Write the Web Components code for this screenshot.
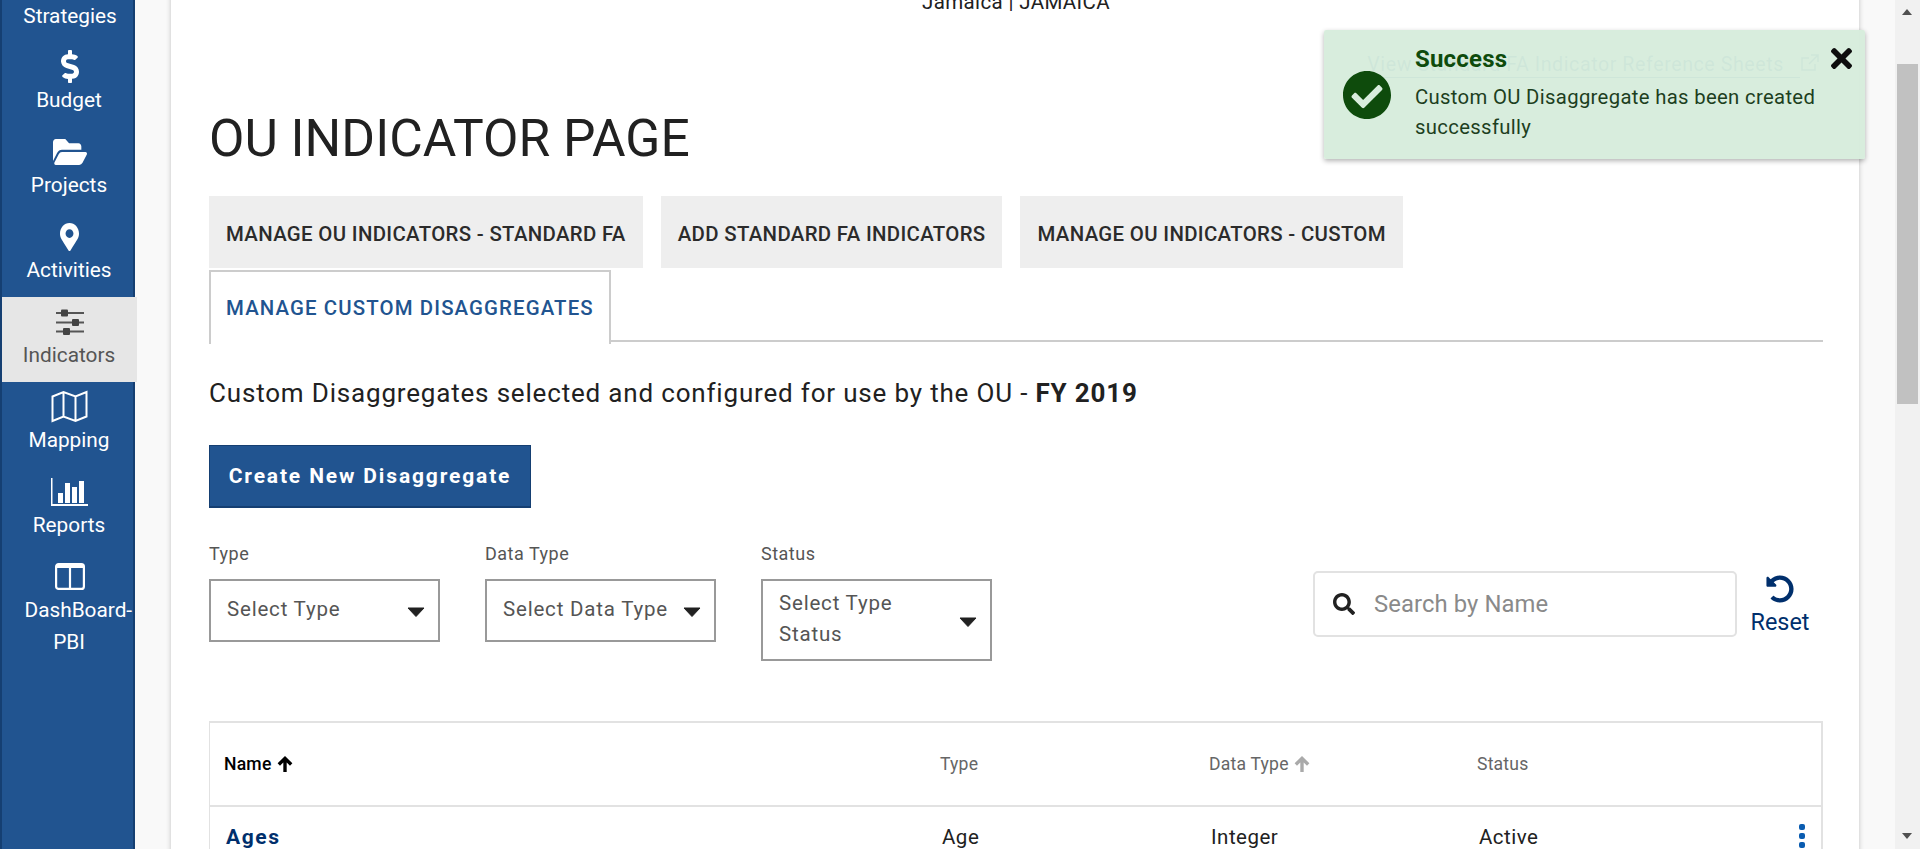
<!DOCTYPE html>
<html lang="en"><head><meta charset="utf-8"><title>OU Indicator Page</title>
<style>
html,body{margin:0;height:849px;overflow:hidden;font-family:Roboto,"Liberation Sans",sans-serif;background:#f9f9f9}
</style></head><body>
<app-shell>
  <side-nav slot="nav"></side-nav>
  <main-card>
    <ou-header slot="head"></ou-header>
    <ou-tabs slot="tabs"></ou-tabs>
    <filter-bar slot="filters"></filter-bar>
    <data-table slot="table"></data-table>
  </main-card>
  <fake-scrollbar slot="bar"></fake-scrollbar>
  <toast-note slot="toast"></toast-note>
</app-shell>
<script>
function def(name, html){
  customElements.define(name, class extends HTMLElement{
    constructor(){super();this.attachShadow({mode:'open'}).innerHTML=html;}
  });
}
const P={
 dollar:'<svg viewBox="0 0 288 512" width="18" height="33" preserveAspectRatio="none" fill="currentColor"><path d="M209.2 233.4l-108-31.6C88.7 198.2 80 186.5 80 173.5c0-16.3 13.2-29.5 29.5-29.5h66.3c12.2 0 24.2 3.7 34.2 10.5 6.1 4.1 14.3 3.1 19.5-2l34.8-34c7.1-6.9 6.1-18.4-1.8-24.5C238 74.8 207.4 64.1 176 64V16c0-8.8-7.2-16-16-16h-32c-8.8 0-16 7.2-16 16v48h-2.5C45.8 64-5.4 118.7.5 183.6c4.2 46.1 39.4 83.6 83.8 96.6l102.5 30c12.5 3.7 21.2 15.3 21.2 28.3 0 16.3-13.2 29.5-29.5 29.5h-66.3C100 368 88 364.3 78 357.5c-6.1-4.1-14.3-3.1-19.5 2l-34.8 34c-7.1 6.9-6.1 18.4 1.8 24.5 24.5 19.2 55.1 29.9 86.5 30v48c0 8.8 7.2 16 16 16h32c8.8 0 16-7.2 16-16v-48.2c46.6-.9 90.3-28.6 105.7-72.7 21.5-61.6-14.6-124.8-72.5-141.7z"/></svg>',
 folder:'<svg viewBox="0 64 576 384" width="34" height="26" preserveAspectRatio="none" fill="currentColor"><path d="M572.694 292.093L500.27 416.248A63.997 63.997 0 0 1 444.989 448H45.025c-18.523 0-30.064-20.093-20.731-36.093l72.424-124.155A64 64 0 0 1 152 256h399.964c18.523 0 30.064 20.093 20.73 36.093zM152 224h328v-48c0-26.51-21.49-48-48-48H272l-64-64H48C21.49 64 0 85.49 0 112v278.046l69.077-118.418C86.214 242.25 117.989 224 152 224z"/></svg>',
 marker:'<svg viewBox="0 0 384 512" width="19" height="28" preserveAspectRatio="none" fill="currentColor"><path d="M172.268 501.67C26.97 291.031 0 268.413 0 192 0 85.961 85.961 0 192 0s192 85.961 192 192c0 76.413-26.97 99.031-172.268 309.67-9.535 13.774-29.93 13.773-39.464 0zM192 272c44.183 0 80-35.817 80-80s-35.817-80-80-80-80 35.817-80 80 35.817 80 80 80z"/></svg>',
 sliders:'<svg viewBox="0 0 28 26" width="28" height="26"><path d="M0 4h28M0 13.500h28M0 22.500h28" stroke="#555" stroke-width="2"/><g fill="#444"><rect x="5" y="0.500" width="7" height="7" rx="1"/><rect x="16" y="10" width="7" height="7" rx="1"/><rect x="7" y="19" width="7" height="7" rx="1"/></g></svg>',
 map:'<svg viewBox="0 0 37 33" width="37" height="33" fill="none" stroke="currentColor" stroke-width="2"><path d="M1.500 6.500L12.500 2L24.500 6.500L35.500 2V26.500L24.500 31L12.500 26.500L1.500 31ZM12.500 2V26.500M24.500 6.500V31"/></svg>',
 chart:'<svg viewBox="0 0 37 28" width="37" height="28" fill="currentColor"><path d="M0 0h1.500v26h35.500v2H0z"/><rect x="7" y="15" width="5" height="10"/><rect x="14" y="5" width="5" height="20"/><rect x="21" y="9" width="5" height="16"/><rect x="28" y="3" width="5" height="22"/></svg>',
 panel:'<svg viewBox="0 0 30 27" width="30" height="27" fill="none" stroke="currentColor" stroke-width="2.200"><rect x="1.100" y="1.100" width="27.800" height="24.800" rx="2.500"/><path d="M15 2v24"/><path d="M1.500 3.500h27" stroke-width="3"/></svg>'
};
def('app-shell',`<style>
:host{display:flex;width:1920px;height:849px;position:relative;overflow:hidden;background:#f9f9f9}
.content{flex:1;min-width:0;padding:0 36px;overflow:hidden}
</style><slot name="nav"></slot><div class="content"><slot></slot></div><slot name="bar"></slot><slot name="toast"></slot>`);

def('nav-item',`<style>
:host{display:flex;flex-direction:column;align-items:center;height:85px;box-sizing:border-box;width:135px;padding:8px 1px 0 0;color:#fff;font-size:20.800px;line-height:32px;text-align:center;white-space:nowrap;flex:none}
:host([active]){background:#e6e6e6;color:#555}
.ic{height:33px;flex:none;display:flex;align-items:center;justify-content:center;line-height:0;padding-left:1px}
.l{margin-top:1px;flex:none}
</style><div class="ic"><slot name="i"></slot></div><div class="l"><slot></slot></div>`);

def('side-nav',`<style>
:host{display:block;width:131px;flex:none;height:849px;background:#215490;border-left:2px solid #153f72;border-right:2px solid #153f72;color:#fff;position:relative;z-index:1}
.top{height:42px;width:135px;text-align:center;font-size:20.800px;line-height:32px;padding-left:1px;box-sizing:border-box}
.list{display:flex;flex-direction:column}
.wrap{display:block;width:89px}
</style><div class="top">Strategies</div><div class="list">
<nav-item><span slot="i">${P.dollar}</span>Budget</nav-item>
<nav-item><span slot="i">${P.folder}</span>Projects</nav-item>
<nav-item><span slot="i">${P.marker}</span>Activities</nav-item>
<nav-item active><span slot="i">${P.sliders}</span>Indicators</nav-item>
<nav-item><span slot="i">${P.map}</span>Mapping</nav-item>
<nav-item><span slot="i">${P.chart}</span>Reports</nav-item>
<nav-item><span slot="i">${P.panel}</span><span class="wrap">DashBoard-<br>PBI</span></nav-item>
</div>`);

def('main-card',`<style>
:host{display:block;background:#fff;box-shadow:0 0 5px rgba(0,0,0,.22);height:900px;margin-top:-10px;padding:0 36px 0 38px;box-sizing:border-box;width:1688px}
</style><slot name="head"></slot><slot name="tabs"></slot><slot name="filters"></slot><slot name="table"></slot>`);

def('ou-header',`<style>
:host{display:block;color:#212121}
.ou{text-align:center;font-size:20.500px;line-height:24px;height:24px;letter-spacing:.35px}
.link{display:flex;justify-content:flex-end;height:30px;margin-top:39px;font-size:19.600px;color:#0a4e96;padding-right:3px}
.link span{border-bottom:1px solid #0a4e96;line-height:24px;height:24px;letter-spacing:.58px;padding-right:16px}
h1{margin:0;font-weight:400;font-size:51.500px;line-height:56px;margin-top:28px;letter-spacing:0;color:#212121}
</style><div class="ou">Jamaica | JAMAICA</div>
<div class="link"><span>View Standard FA Indicator Reference Sheets</span><svg viewBox="0 0 20 20" width="20" height="20" fill="none" stroke="currentColor" stroke-width="1.500"><path d="M15 11v6H2V5h7M11 2h7v7M18 2L9 11"/></svg></div>
<h1>OU INDICATOR PAGE</h1>`);

def('ou-tabs',`<style>
:host{display:block;margin-top:29px}
.row{display:flex;flex-wrap:wrap;gap:0 18px;border-bottom:2px solid #ccc;height:146px;box-sizing:border-box;align-content:flex-start}
.t{height:72px;box-sizing:border-box;background:#eee;padding:3px 17px 0;display:flex;align-items:center;font-size:20.400px;font-weight:500;color:#2b2b2b;white-space:nowrap;letter-spacing:.33px}
.brk{flex-basis:100%;height:0}
.a{height:74px;margin-top:2px;background:#fff;border:2px solid #ccc;border-bottom:0;color:#215490;padding:0 15px;letter-spacing:1.120px;position:relative}
.a::after{content:"";position:absolute;left:0;right:0;bottom:-2px;height:2px;background:#fff}
h2{margin:35px 0 0;font-weight:400;font-size:26px;line-height:32px;letter-spacing:.82px;color:#212121}
b{font-weight:700}
button{display:block;margin-top:36px;width:322px;height:63px;background:#215490;border:2px solid #153f72;border-width:1px 1px 2px;color:#fff;font:700 21px Roboto,sans-serif;letter-spacing:1.850px;padding:0}
</style><div class="row"><div class="t">MANAGE OU INDICATORS - STANDARD FA</div><div class="t">ADD STANDARD FA INDICATORS</div><div class="t">MANAGE OU INDICATORS - CUSTOM</div><div class="brk"></div><div class="t a">MANAGE CUSTOM DISAGGREGATES</div></div>
<h2>Custom Disaggregates selected and configured for use by the OU - <b>FY 2019</b></h2>
<button>Create New Disaggregate</button>`);

def('select-box',`<style>
:host{display:block;width:231px;color:#555}
label{display:block;font-size:18px;line-height:24px;height:24px;letter-spacing:.5px}
.b{margin-top:13px;box-sizing:border-box;border:2px solid #999;min-height:63px;display:flex;align-items:center;padding:7px 14px 9px 16px;font-size:20.500px;line-height:31px;letter-spacing:.8px;position:relative;color:#555}
.c{flex:1;white-space:nowrap}
svg{flex:none;margin-left:2px;margin-right:-1px;margin-top:5px}
</style><label><slot name="l"></slot></label><div class="b"><div class="c"><slot></slot></div><svg viewBox="0 0 18 10" width="18" height="10"><path d="M1 1h16L9 9.500z" fill="#212121" stroke="#212121" stroke-linejoin="round"/></svg></div>`);

def('filter-bar',`<style>
:host{display:flex;align-items:flex-start;margin-top:34px;height:179px}
.f{display:flex;gap:45px}
.s{margin-left:auto;display:flex;align-items:flex-start;margin-top:29px}
.box{box-sizing:border-box;width:424px;height:66px;border:2px solid #e2e2e2;border-radius:5px;display:flex;align-items:center;padding-left:18px;font-size:23.800px;color:#8a8a8a;letter-spacing:.1px}
.box svg{margin-right:19px;flex:none}
.r{width:86px;text-align:center;color:#002f6c;font-size:23.400px;line-height:26px;display:flex;flex-direction:column;align-items:center}
.r svg{margin:4px 0 6px}
</style><div class="f">
<select-box><span slot="l">Type</span>Select Type</select-box>
<select-box><span slot="l">Data Type</span>Select Data Type</select-box>
<select-box><span slot="l">Status</span>Select Type<br>Status</select-box></div>
<div class="s"><div class="box"><svg viewBox="0 0 512 512" width="22" height="22" fill="#212121"><path d="M505 442.7L405.3 343c-4.5-4.5-10.6-7-17-7H372c27.6-35.3 44-79.7 44-128C416 93.1 322.9 0 208 0S0 93.1 0 208s93.1 208 208 208c48.3 0 92.7-16.4 128-44v16.3c0 6.4 2.5 12.5 7 17l99.7 99.7c9.4 9.4 24.6 9.4 33.9 0l28.3-28.3c9.4-9.4 9.4-24.6.1-34zM208 336c-70.7 0-128-57.2-128-128 0-70.7 57.2-128 128-128 70.7 0 128 57.2 128 128 0 70.7-57.2 128-128 128z"/></svg>Search by Name</div>
<div class="r"><svg viewBox="0 0 512 512" width="28" height="28" fill="#002f6c"><path d="M255.545 8c-66.269.119-126.438 26.233-170.86 68.685L48.971 40.971C33.851 25.851 8 36.559 8 57.941V192c0 13.255 10.745 24 24 24h134.059c21.382 0 32.09-25.851 16.971-40.971l-41.75-41.75c30.864-28.899 70.801-44.907 113.23-45.273 92.398-.798 170.283 73.977 169.484 169.442C423.236 348.009 349.816 424 256 424c-41.127 0-79.997-14.678-110.63-41.556-4.743-4.161-11.906-3.908-16.368.553L89.34 422.659c-4.872 4.872-4.631 12.815.482 17.433C133.798 479.813 192.074 504 256 504c136.966 0 247.999-111.033 248-247.998C504.001 119.193 392.354 7.755 255.545 8z"/></svg>Reset</div></div>`);

const UP=c=>`<svg viewBox="0 0 16 16" width="18" height="18" style="vertical-align:-3px" fill="none" stroke="${c}" stroke-width="3"><path d="M8 15V3M2.500 8.500L8 3l5.500 5.500"/></svg>`;
def('data-table',`<style>
:host{display:block;border:1px solid #e2e2e2;border-width:2px 2px 0 1px;height:200px;box-sizing:border-box}
.r{display:grid;grid-template-columns:716px 269px 268px 1fr}
.h{height:82px;border-bottom:2px solid #e2e2e2;align-items:center;font-size:17.600px;color:#666}
.h div{padding-left:14px;letter-spacing:.2px}
.h div:first-child{color:#000;font-weight:500;padding-left:14px}
.d{font-size:20.500px;color:#212121;padding-top:16px;line-height:28px;letter-spacing:.5px;position:relative}
.d div{padding-left:16px}
.d div:first-child{font-weight:700;color:#002f6c;letter-spacing:1.600px;font-size:21px}
.k{position:absolute;right:16px;top:17px}
</style><div class="r h"><div>Name ${UP('#000')}</div><div>Type</div><div>Data Type ${UP('#aaa')}</div><div>Status</div></div>
<div class="r d"><div>Ages</div><div>Age</div><div>Integer</div><div>Active</div><span class="k"><svg viewBox="0 0 6 24" width="6" height="24" fill="#0a5cb0"><rect y="0" width="6" height="6" rx="2"/><rect y="9" width="6" height="6" rx="2"/><rect y="18" width="6" height="6" rx="2"/></svg></span></div>`);

def('fake-scrollbar',`<style>
:host{display:block;flex:none;width:25px;height:849px;background:#f1f1f1;position:relative}
.thumb{position:absolute;top:64px;left:2px;right:2px;height:340px;background:#c1c1c1}
.u,.d{position:absolute;left:7px;width:0;height:0;border-left:5.500px solid transparent;border-right:5.500px solid transparent}
.u{top:9px;border-bottom:6px solid #505050}
.d{top:833px;border-top:6px solid #505050}
</style><div class="u"></div><div class="thumb"></div><div class="d"></div>`);

def('toast-note',`<style>
:host{position:absolute;left:1324px;top:30px;width:541px;height:129px;background:rgba(214,236,220,.96);box-shadow:0 2px 5px rgba(0,0,0,.3);border-radius:2px;box-sizing:border-box;display:block;color:#1d3f1e;z-index:2}
.ic{position:absolute;left:19px;top:41px}
.t{position:absolute;left:91px;top:16px;font-size:24px;font-weight:700;line-height:26px;color:#0e4b0c;letter-spacing:.2px}
.m{position:absolute;left:91px;top:52px;width:430px;font-size:20.300px;line-height:30px;letter-spacing:.33px}
.x{position:absolute;left:507px;top:17px}
</style><svg class="ic" viewBox="8 8 496 496" width="48" height="48"><path fill="#0e4b0c" d="M504 256c0 136.967-111.033 248-248 248S8 392.967 8 256 119.033 8 256 8s248 111.033 248 248zM227.314 387.314l184-184c6.248-6.248 6.248-16.379 0-22.627l-22.627-22.627c-6.248-6.249-16.379-6.249-22.628 0L216 308.118l-70.059-70.059c-6.248-6.248-16.379-6.248-22.628 0l-22.627 22.627c-6.248 6.248-6.248 16.379 0 22.627l104 104c6.249 6.249 16.379 6.249 22.628.001z"/></svg>
<div class="t">Success</div><div class="m">Custom OU Disaggregate has been created successfully</div>
<svg class="x" viewBox="0 64 352 384" width="21" height="23" fill="#0d0d0d"><path d="M242.72 256l100.07-100.07c12.28-12.28 12.28-32.19 0-44.48l-22.24-22.24c-12.28-12.28-32.19-12.28-44.48 0L176 189.28 75.93 89.21c-12.28-12.28-32.19-12.28-44.48 0L9.21 111.45c-12.28 12.28-12.28 32.19 0 44.48L109.28 256 9.21 356.07c-12.28 12.28-12.28 32.19 0 44.48l22.24 22.24c12.28 12.28 32.2 12.28 44.48 0L176 322.72l100.07 100.07c12.28 12.28 32.2 12.28 44.48 0l22.24-22.24c12.28-12.28 12.28-32.19 0-44.48L242.72 256z"/></svg>`);
</script></body></html>
